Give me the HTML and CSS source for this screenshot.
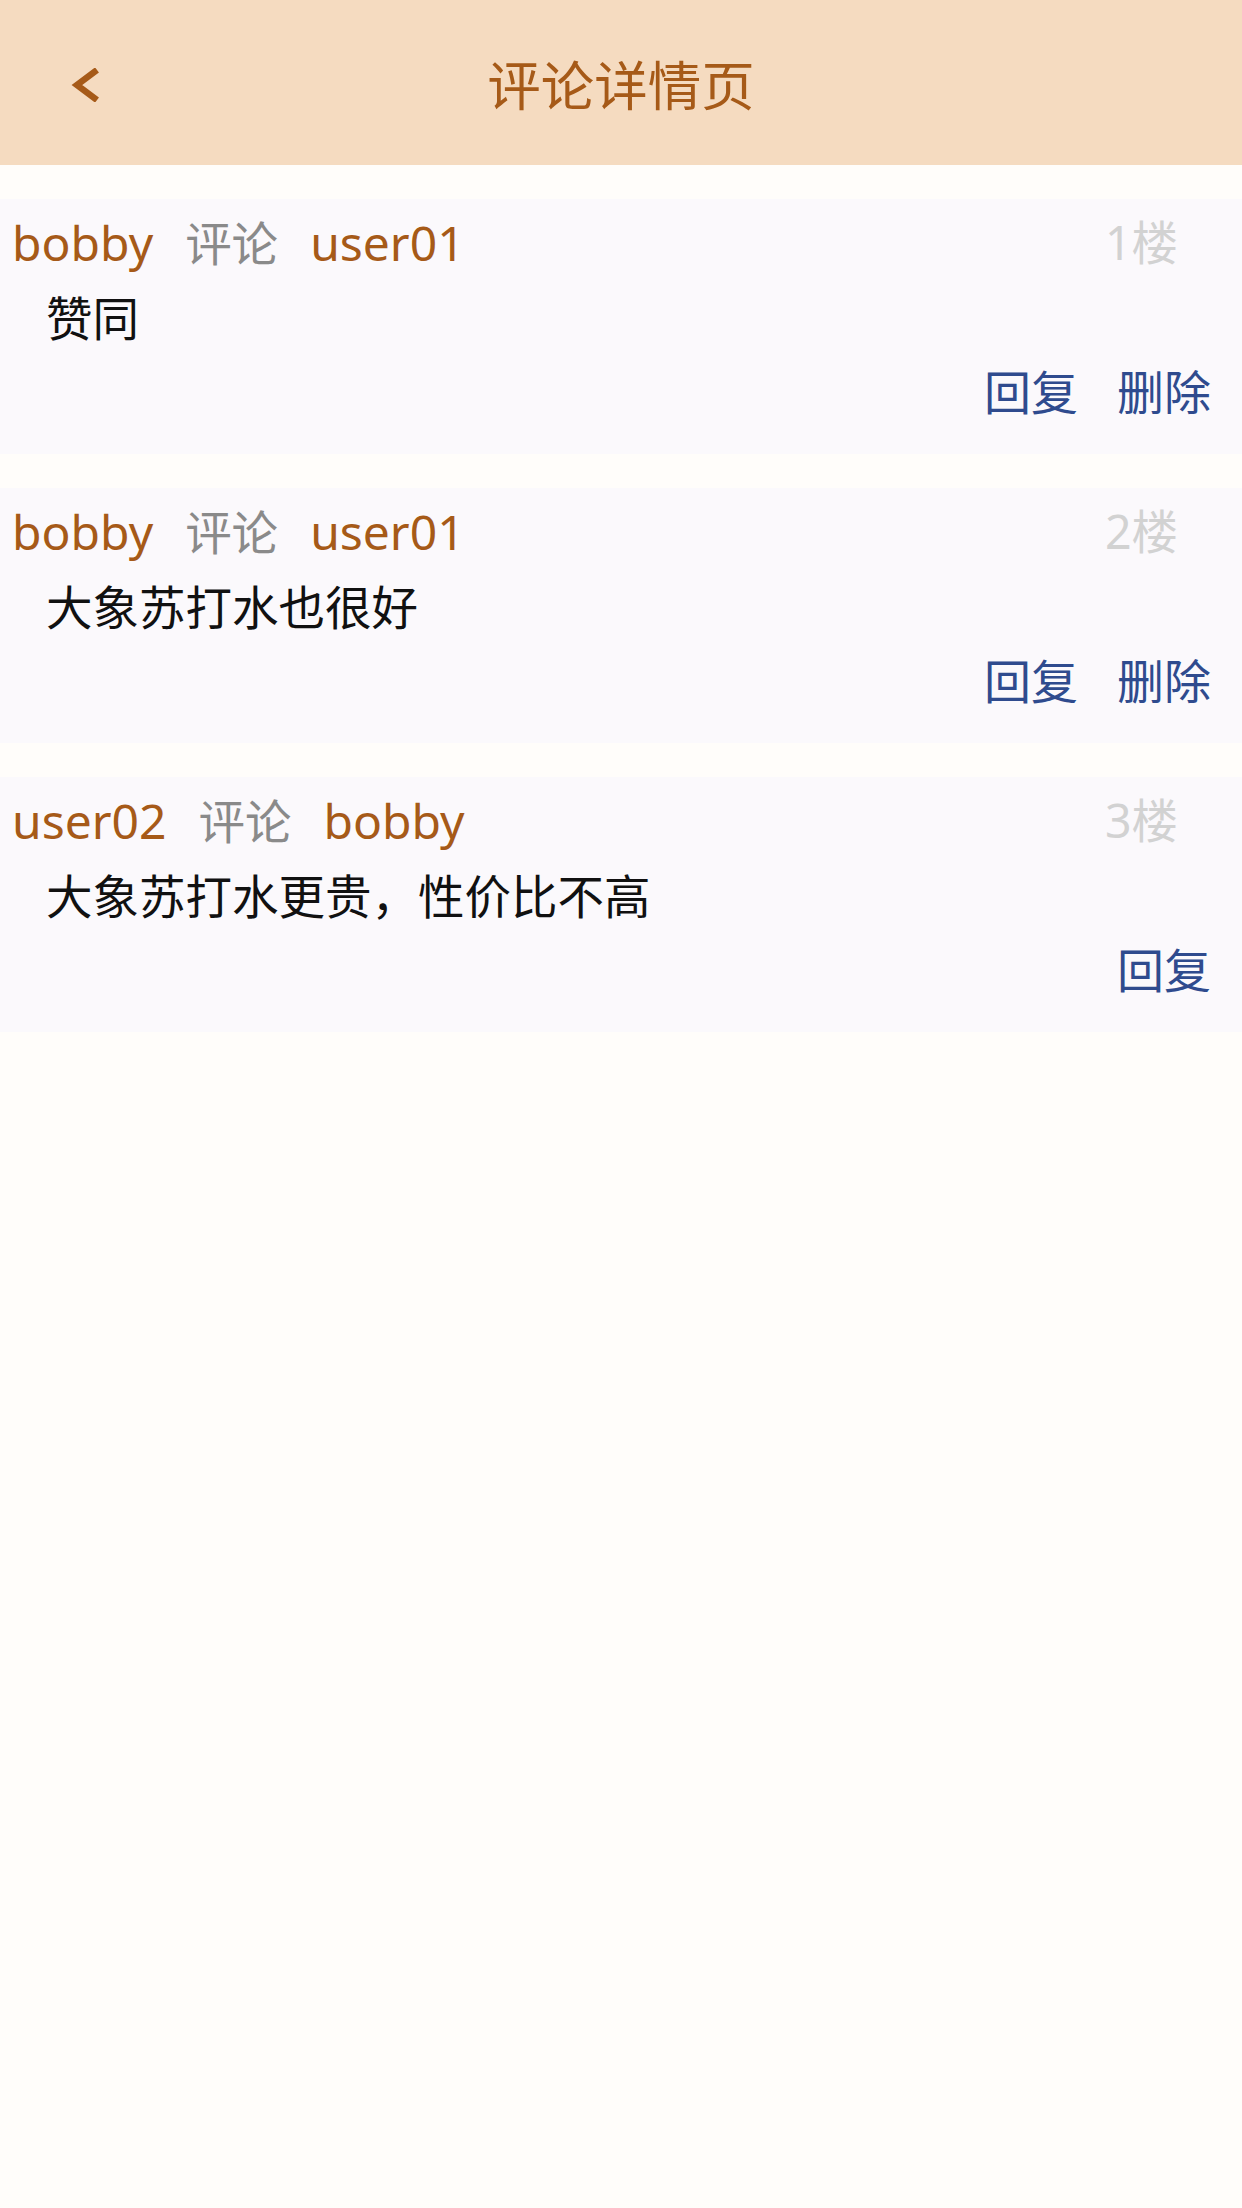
FILE: index.html
```html
<!DOCTYPE html>
<html lang="zh-CN">
<head>
<meta charset="utf-8">
<title>评论详情页</title>
<link rel="stylesheet" href="styles.css">
</head>
<body>
<header class="topbar">
  <div class="back">
    <svg class="back-icon" width="30" height="34" viewBox="0 0 30 34"><polyline points="26,2 6,17 26,32" fill="none" stroke="#a65a18" stroke-width="6.5" stroke-linejoin="miter"/></svg>
  </div>
  <h1 class="title">评论详情页</h1>
  <div class="spacer"></div>
</header>

<main class="list">
  <section class="card">
    <div class="meta">
      <div class="who">
        <span class="name">bobby</span>
        <span class="verb">评论</span>
        <span class="name">user01</span>
      </div>
      <span class="floor">1楼</span>
    </div>
    <p class="content">赞同</p>
    <div class="actions">
      <span class="act">回复</span>
      <span class="act">删除</span>
    </div>
  </section>

  <section class="card">
    <div class="meta">
      <div class="who">
        <span class="name">bobby</span>
        <span class="verb">评论</span>
        <span class="name">user01</span>
      </div>
      <span class="floor">2楼</span>
    </div>
    <p class="content">大象苏打水也很好</p>
    <div class="actions">
      <span class="act">回复</span>
      <span class="act">删除</span>
    </div>
  </section>

  <section class="card">
    <div class="meta">
      <div class="who">
        <span class="name">user02</span>
        <span class="verb">评论</span>
        <span class="name">bobby</span>
      </div>
      <span class="floor">3楼</span>
    </div>
    <p class="content">大象苏打水更贵，性价比不高</p>
    <div class="actions">
      <span class="act">回复</span>
    </div>
  </section>
</main>
</body>
</html>
```

FILE: styles.css
```css
* { box-sizing: border-box; }

html, body {
  margin: 0;
  padding: 0;
}

body {
  background: #fffdfa;
  min-height: 2208px;
  font-family: "Noto Sans", "Noto Sans CJK SC", sans-serif;
  font-size: 46.5px;
}

.topbar {
  height: 165px;
  background: #f5dbc0;
  display: grid;
  grid-template-columns: 1fr auto 1fr;
  align-items: center;
}

.back {
  padding-left: 71px;
  display: flex;
  align-items: center;
  padding-top: 4px;
}

.back-icon { display: block; }

.title {
  margin: 0;
  font-family: "Noto Sans CJK SC", sans-serif;
  font-weight: 400;
  font-size: 53.5px;
  line-height: 1;
  color: #a65a18;
}

.list {
  display: flex;
  flex-direction: column;
}

.card {
  margin-top: 34px;
  background: #fbf9fc;
  padding: 6px 31px 26px 12px;
  height: 255px;
}

.meta {
  display: flex;
  justify-content: space-between;
  align-items: center;
  line-height: 74px;
  height: 74px;
}

.who {
  display: flex;
  align-items: baseline;
  gap: 32px;
}

.name {
  color: #a65a18;
  font-size: 48px;
}

.verb {
  color: #8a8a8a;
  font-family: "Noto Sans CJK SC", sans-serif;
}

.floor {
  color: #d2d2d2;
  margin-right: 33px;
}

.content {
  margin: 0;
  padding-left: 34px;
  line-height: 74px;
  height: 74px;
  color: #111;
  font-family: "Noto Sans CJK SC", sans-serif;
}

.actions {
  display: flex;
  justify-content: flex-end;
  gap: 39px;
  line-height: 74px;
  height: 74px;
}

.act {
  color: #2f4b8e;
  font-family: "Noto Sans CJK SC", sans-serif;
  font-size: 47px;
}
```
